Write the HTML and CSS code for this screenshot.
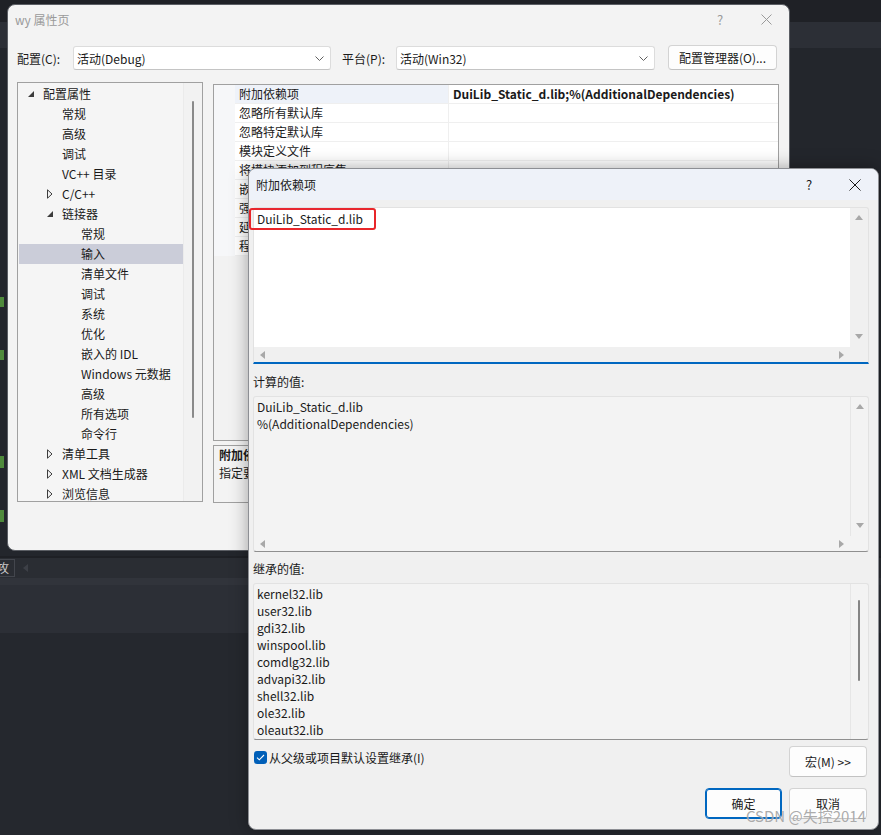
FILE: index.html
```html
<!DOCTYPE html>
<html lang="zh-CN">
<head>
    <meta charset="UTF-8">
    <title>wy 属性页 - 附加依赖项</title>
    <link rel="stylesheet" href="styles.css">
</head>
<body>
    <!-- IDE behind the dialogs -->
    <div class="ide">
        <div class="ide-title"></div>
        <div class="ide-tabs"></div>
        <div class="ide-editor">
            <span class="gutter-mark m1"></span>
            <span class="gutter-mark m2"></span>
            <span class="gutter-mark m3"></span>
            <span class="gutter-mark m4"></span>
        </div>
        <div class="ide-gap"></div>
        <div class="ide-bar"><span class="ide-tab">攻</span><span class="ide-arrow"></span></div>
        <div class="ide-sep"></div>
        <div class="ide-panel"></div>
    </div>

    <!-- Property pages window -->
    <div class="window prop-window">
        <div class="caption">
            <span class="caption-title">wy 属性页</span>
            <div class="caption-btns">
                <span class="cap-btn help">?</span>
                <span class="cap-btn"><svg width="11" height="11" viewBox="0 0 11 11"><path d="M0.5 0.5L10.5 10.5M10.5 0.5L0.5 10.5" stroke="#9a9a9a" stroke-width="1"/></svg></span>
            </div>
        </div>

        <div class="toolbar">
            <span class="tb-label">配置(C):</span>
            <div class="combo combo-config">
                <span>活动(Debug)</span>
                <svg width="9" height="5" viewBox="0 0 9 5"><path d="M0.5 0.5L4.5 4.5L8.5 0.5" fill="none" stroke="#606060"/></svg>
            </div>
            <span class="tb-label platform">平台(P):</span>
            <div class="combo combo-platform">
                <span>活动(Win32)</span>
                <svg width="9" height="5" viewBox="0 0 9 5"><path d="M0.5 0.5L4.5 4.5L8.5 0.5" fill="none" stroke="#606060"/></svg>
            </div>
            <button class="btn config-mgr">配置管理器(O)...</button>
        </div>

        <div class="panels">
            <div class="tree">
                <div class="tree-list">
                    <div class="tree-row lvl0"><span class="twisty"><svg width="6" height="6" viewBox="0 0 6 6"><path d="M6 0L6 6L0 6Z" fill="#3c3c3c"/></svg></span>配置属性</div>
                    <div class="tree-row lvl1"><span class="twisty"></span>常规</div>
                    <div class="tree-row lvl1"><span class="twisty"></span>高级</div>
                    <div class="tree-row lvl1"><span class="twisty"></span>调试</div>
                    <div class="tree-row lvl1"><span class="twisty"></span>VC++ 目录</div>
                    <div class="tree-row lvl1"><span class="twisty"><svg width="6" height="10" viewBox="0 0 6 10"><path d="M0.5 0.8L5 5L0.5 9.2Z" fill="none" stroke="#3c3c3c"/></svg></span>C/C++</div>
                    <div class="tree-row lvl1"><span class="twisty"><svg width="6" height="6" viewBox="0 0 6 6"><path d="M6 0L6 6L0 6Z" fill="#3c3c3c"/></svg></span>链接器</div>
                    <div class="tree-row lvl2"><span class="twisty"></span>常规</div>
                    <div class="tree-row lvl2 selected"><span class="twisty"></span>输入</div>
                    <div class="tree-row lvl2"><span class="twisty"></span>清单文件</div>
                    <div class="tree-row lvl2"><span class="twisty"></span>调试</div>
                    <div class="tree-row lvl2"><span class="twisty"></span>系统</div>
                    <div class="tree-row lvl2"><span class="twisty"></span>优化</div>
                    <div class="tree-row lvl2"><span class="twisty"></span>嵌入的 IDL</div>
                    <div class="tree-row lvl2"><span class="twisty"></span>Windows 元数据</div>
                    <div class="tree-row lvl2"><span class="twisty"></span>高级</div>
                    <div class="tree-row lvl2"><span class="twisty"></span>所有选项</div>
                    <div class="tree-row lvl2"><span class="twisty"></span>命令行</div>
                    <div class="tree-row lvl1"><span class="twisty"><svg width="6" height="10" viewBox="0 0 6 10"><path d="M0.5 0.8L5 5L0.5 9.2Z" fill="none" stroke="#3c3c3c"/></svg></span>清单工具</div>
                    <div class="tree-row lvl1"><span class="twisty"><svg width="6" height="10" viewBox="0 0 6 10"><path d="M0.5 0.8L5 5L0.5 9.2Z" fill="none" stroke="#3c3c3c"/></svg></span>XML 文档生成器</div>
                    <div class="tree-row lvl1"><span class="twisty"><svg width="6" height="10" viewBox="0 0 6 10"><path d="M0.5 0.8L5 5L0.5 9.2Z" fill="none" stroke="#3c3c3c"/></svg></span>浏览信息</div>
                </div>
                <div class="tree-scroll"><span class="thumb"></span></div>
            </div>

            <div class="right-col">
                <div class="prop-grid">
                    <div class="grid-row current"><span class="gutter"></span><span class="name">附加依赖项</span><span class="value">DuiLib_Static_d.lib;%(AdditionalDependencies)</span></div>
                    <div class="grid-row"><span class="gutter"></span><span class="name">忽略所有默认库</span><span class="value"></span></div>
                    <div class="grid-row"><span class="gutter"></span><span class="name">忽略特定默认库</span><span class="value"></span></div>
                    <div class="grid-row"><span class="gutter"></span><span class="name">模块定义文件</span><span class="value"></span></div>
                    <div class="grid-row"><span class="gutter"></span><span class="name">将模块添加到程序集</span><span class="value"></span></div>
                    <div class="grid-row"><span class="gutter"></span><span class="name">嵌入托管资源文件</span><span class="value"></span></div>
                    <div class="grid-row"><span class="gutter"></span><span class="name">强制符号引用</span><span class="value"></span></div>
                    <div class="grid-row"><span class="gutter"></span><span class="name">延迟加载的 DLL</span><span class="value"></span></div>
                    <div class="grid-row"><span class="gutter"></span><span class="name">程序集链接资源</span><span class="value"></span></div>
                </div>
                <div class="description">
                    <div class="desc-title">附加依赖项</div>
                    <div>指定要添加到链接命令行的附加项。[例如 kernel32.lib]</div>
                </div>
            </div>
        </div>
    </div>

    <!-- Additional dependencies dialog -->
    <div class="window dep-dialog">
        <div class="caption active">
            <span class="caption-title">附加依赖项</span>
            <div class="caption-btns">
                <span class="cap-btn help">?</span>
                <span class="cap-btn"><svg width="12" height="12" viewBox="0 0 12 12"><path d="M0.5 0.5L11.5 11.5M11.5 0.5L0.5 11.5" stroke="#1b1b1b" stroke-width="1"/></svg></span>
            </div>
        </div>

        <div class="dlg-body">
            <div class="textbox editable">
                <div class="tb-main">
                    <div class="tb-text white">DuiLib_Static_d.lib</div>
                    <div class="vscroll">
                        <svg width="8" height="5" viewBox="0 0 8 5"><path d="M0 5L4 0L8 5Z" fill="#a8a8a8"/></svg>
                        <svg width="8" height="5" viewBox="0 0 8 5"><path d="M0 0L4 5L8 0Z" fill="#a8a8a8"/></svg>
                    </div>
                </div>
                <div class="hscroll">
                    <svg width="5" height="8" viewBox="0 0 5 8"><path d="M5 0L0 4L5 8Z" fill="#a8a8a8"/></svg>
                    <svg width="5" height="8" viewBox="0 0 5 8"><path d="M0 0L5 4L0 8Z" fill="#a8a8a8"/></svg>
                </div>
            </div>

            <div class="field-label">计算的值:</div>
            <div class="textbox readonly">
                <div class="tb-main">
                    <div class="tb-text">
                        <div>DuiLib_Static_d.lib</div>
                        <div>%(AdditionalDependencies)</div>
                    </div>
                    <div class="vscroll">
                        <svg width="8" height="5" viewBox="0 0 8 5"><path d="M0 5L4 0L8 5Z" fill="#a8a8a8"/></svg>
                        <svg width="8" height="5" viewBox="0 0 8 5"><path d="M0 0L4 5L8 0Z" fill="#a8a8a8"/></svg>
                    </div>
                </div>
                <div class="hscroll">
                    <svg width="5" height="8" viewBox="0 0 5 8"><path d="M5 0L0 4L5 8Z" fill="#a8a8a8"/></svg>
                    <svg width="5" height="8" viewBox="0 0 5 8"><path d="M0 0L5 4L0 8Z" fill="#a8a8a8"/></svg>
                </div>
            </div>

            <div class="field-label second">继承的值:</div>
            <div class="textbox readonly inherited">
                <div class="tb-main">
                    <div class="tb-text">
                        <div>kernel32.lib</div>
                        <div>user32.lib</div>
                        <div>gdi32.lib</div>
                        <div>winspool.lib</div>
                        <div>comdlg32.lib</div>
                        <div>advapi32.lib</div>
                        <div>shell32.lib</div>
                        <div>ole32.lib</div>
                        <div>oleaut32.lib</div>
                    </div>
                    <div class="vscroll thin"><span class="thumb"></span></div>
                </div>
            </div>

            <div class="option-row">
                <label class="check">
                    <span class="check-box"><svg width="9" height="7" viewBox="0 0 9 7"><path d="M1 3.6L3.3 5.8L8 1" fill="none" stroke="#fff" stroke-width="1.1"/></svg></span>
                    从父级或项目默认设置继承(I)
                </label>
                <button class="btn wide">宏(M) &gt;&gt;</button>
            </div>

            <div class="actions">
                <button class="btn primary">确定</button>
                <button class="btn wide">取消</button>
            </div>
        </div>
    </div>

    <!-- screenshot annotations -->
    <div class="annot"></div>
    <div class="watermark">CSDN @失控2014</div>
</body>
</html>
```

FILE: styles.css
```css
/* Base */
body {
    margin: 0;
    width: 881px;
    height: 835px;
    overflow: hidden;
    position: relative;
    background: #25282e;
    font-family: "Noto Sans CJK SC", "Microsoft YaHei UI", sans-serif;
    font-size: 12px;
    color: #1a1a1a;
}

button {
    font: inherit;
    color: inherit;
}

/* IDE backdrop */
.ide-title { height: 22px; background: #1f2126; }
.ide-tabs { height: 26px; background: #2c2f36; }

.ide-editor {
    height: 508px;
    background: #23262c;
    display: flex;
    flex-direction: column;
}

.gutter-mark {
    width: 4px;
    height: 10px;
    background: #4f8a3c;
}
.m1 { margin-top: 249px; }
.m2 { margin-top: 43px; }
.m3 { margin-top: 96px; height: 12px; }
.m4 { margin-top: 42px; height: 12px; }

.ide-gap { height: 2px; background: #1e2025; }

.ide-bar {
    height: 20px;
    background: #2a2d33;
    display: flex;
    align-items: center;
    gap: 8px;
}

.ide-tab {
    height: 18px;
    width: 15px;
    border: 1px solid #43464d;
    border-left: 0;
    box-sizing: border-box;
    color: #c8c8c8;
    font-size: 12px;
    line-height: 16px;
    overflow: hidden;
    text-indent: -3px;
}

.ide-arrow {
    width: 0;
    height: 0;
    border-top: 4px solid transparent;
    border-bottom: 4px solid transparent;
    border-right: 5px solid #3d4047;
}

.ide-sep { height: 7px; background: #31343b; }
.ide-panel { height: 48px; background: #2c2f36; }

/* Windows */
.window {
    position: absolute;
    box-sizing: border-box;
    border-radius: 8px;
    overflow: hidden;
}

.prop-window {
    left: 7px;
    top: 4px;
    width: 783px;
    height: 547px;
    background: #f3f3f3;
    border: 1px solid #5b5e64;
}

.dep-dialog {
    left: 248px;
    top: 168px;
    width: 631px;
    height: 662px;
    background: #f0f0f0;
    border: 1px solid #8d8f94;
    box-shadow: 0 0 18px rgba(0, 0, 0, 0.35);
}

.caption {
    height: 29px;
    display: flex;
    align-items: center;
    justify-content: space-between;
    padding-left: 7px;
}

.caption-title { color: #9a9a9a; }

.caption.active {
    height: 31px;
    background: #eef2f9;
}
.caption.active .caption-title { color: #1a1a1a; }

.caption-btns {
    display: flex;
    align-self: stretch;
}

.cap-btn {
    width: 46px;
    display: flex;
    align-items: center;
    justify-content: center;
}

.cap-btn.help {
    color: #9a9a9a;
    font-size: 13px;
}
.active .cap-btn.help { color: #1b1b1b; }

/* Toolbar */
.toolbar {
    display: flex;
    align-items: center;
    margin-top: 12px;
    padding-left: 9px;
    height: 24px;
}

.tb-label { width: 56px; }
.tb-label.platform {
    width: 54px;
    margin-left: 11px;
}

.combo {
    height: 24px;
    box-sizing: border-box;
    background: #fff;
    border: 1px solid #dcdcdc;
    border-bottom-color: #c4c4c4;
    border-radius: 3px;
    display: flex;
    align-items: center;
    justify-content: space-between;
    padding: 0 6px 0 3px;
}
.combo-config { width: 258px; }
.combo-platform { width: 259px; }

.btn {
    height: 31px;
    box-sizing: border-box;
    background: #fdfdfd;
    border: 1px solid #d3d3d3;
    border-bottom-color: #c2c2c2;
    border-radius: 4px;
    padding: 0;
}

.config-mgr {
    width: 109px;
    height: 25px;
    margin-left: 13px;
    margin-top: -1px;
}

/* Left tree and property grid */
.panels {
    display: flex;
    align-items: flex-start;
    gap: 10px;
    margin-top: 12px;
    padding-left: 9px;
}

.tree {
    width: 186px;
    height: 420px;
    box-sizing: border-box;
    border: 1px solid #a0a0a0;
    background: #f5f5f5;
    display: flex;
    overflow: hidden;
}

.tree-list {
    flex: 1;
    padding: 1px 0 0 1px;
}

.tree-row {
    height: 20px;
    line-height: 20px;
    display: flex;
    align-items: center;
    white-space: nowrap;
}
.tree-row.lvl0 { padding-left: 5px; }
.tree-row.lvl1 { padding-left: 24px; }
.tree-row.lvl2 { padding-left: 43px; }
.tree-row.selected { background: #cbcdd9; }

.twisty {
    width: 19px;
    display: flex;
    align-items: center;
    padding-left: 4px;
    box-sizing: border-box;
}

.tree-scroll {
    width: 18px;
    border-left: 1px solid #ebebeb;
    background: #f2f2f2;
    display: flex;
    justify-content: center;
}
.tree-scroll .thumb {
    width: 2px;
    height: 317px;
    margin-top: 18px;
    border-radius: 1px;
    background: #8a8a8a;
}

.right-col {
    width: 566px;
    margin-top: 2px;
}

.prop-grid {
    height: 357px;
    box-sizing: border-box;
    border: 1px solid #a0a0a0;
    background: #f2f2f2;
    overflow: hidden;
}

.grid-row {
    display: grid;
    grid-template-columns: 21px 214px 1fr;
    height: 19px;
    line-height: 18px;
}

.grid-row span {
    border-bottom: 1px solid #efefef;
    white-space: nowrap;
    overflow: hidden;
}
.grid-row .gutter { background: #f6f7f9; border-bottom-color: #f6f7f9; }
.grid-row .name {
    background: #fff;
    padding-left: 4px;
    border-right: 1px solid #efefef;
}
.grid-row .value {
    background: #fff;
    padding-left: 4px;
    font-weight: bold;
}
.grid-row.current .name { background: #eef2f9; }

.description {
    height: 58px;
    margin-top: 4px;
    box-sizing: border-box;
    border: 1px solid #a0a0a0;
    padding: 0 5px;
    line-height: 18px;
    white-space: nowrap;
    overflow: hidden;
}
.desc-title { font-weight: bold; }

/* Additional dependencies dialog body */
.dlg-body {
    padding: 7px 9px 0 4px;
}

.textbox {
    border: 1px solid #e2e2e2;
    border-bottom-color: #8f8f8f;
    border-radius: 3px;
    background: #f3f3f3;
}

.textbox.editable {
    border-bottom: 2px solid #0067c0;
    border-radius: 3px 3px 0 0;
    background: #f0f0f0;
}

.tb-main {
    height: 139px;
    display: flex;
}

.textbox.inherited .tb-main { height: 155px; }

.tb-text {
    flex: 1;
    padding: 1px 0 0 3px;
    line-height: 17px;
    white-space: nowrap;
}
.tb-text.white {
    background: #fff;
    padding-top: 2px;
}

.vscroll {
    width: 18px;
    border-left: 1px solid #e6e6e6;
    display: flex;
    flex-direction: column;
    align-items: center;
    justify-content: space-between;
    padding: 7px 0 8px;
    box-sizing: border-box;
}
.editable .vscroll { border-left: 0; }

.vscroll.thin {
    justify-content: flex-start;
    align-items: flex-end;
    padding: 16px 8px 0 0;
}
.vscroll .thumb {
    width: 2px;
    height: 81px;
    border-radius: 1px;
    background: #858585;
}

.hscroll {
    height: 15px;
    margin-right: 18px;
    display: flex;
    align-items: center;
    justify-content: space-between;
    padding: 0 6px;
}

.field-label {
    height: 32px;
    padding-top: 9px;
    line-height: 17px;
    box-sizing: border-box;
}
.field-label.second {
    height: 31px;
    padding-top: 8px;
}

.option-row {
    display: flex;
    justify-content: space-between;
    align-items: flex-start;
    margin-top: 6px;
    padding-left: 1px;
}

.check {
    display: flex;
    align-items: center;
    gap: 2px;
    margin-top: 4px;
    line-height: 15px;
}

.check-box {
    width: 13px;
    height: 13px;
    border-radius: 3px;
    background: #005fb8;
    display: flex;
    align-items: center;
    justify-content: center;
}

.btn.wide {
    width: 78px;
    margin-right: 2px;
}

.actions {
    display: flex;
    justify-content: flex-end;
    gap: 7px;
    margin-top: 11px;
}

.btn.primary {
    width: 77px;
    border: 1px solid #0067c0;
    box-shadow: inset 0 0 0 1px #0067c0;
}

/* Overlays added on the screenshot */
.annot {
    position: absolute;
    left: 249px;
    top: 208px;
    width: 127px;
    height: 22px;
    box-sizing: border-box;
    border: 2px solid #e8262a;
    border-radius: 3px;
}

.watermark {
    position: absolute;
    right: 15px;
    top: 806px;
    font-size: 15px;
    line-height: 20px;
    color: rgba(150, 150, 150, 0.8);
    text-shadow: 0 0 1px rgba(255, 255, 255, 0.6);
}
```
